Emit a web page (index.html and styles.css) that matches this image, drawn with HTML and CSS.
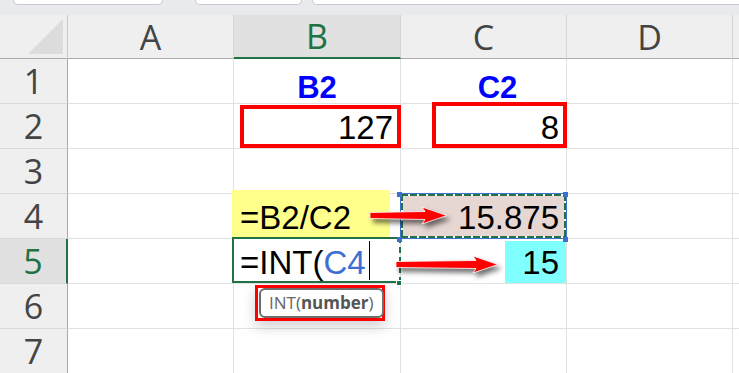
FILE: index.html
```html
<!DOCTYPE html>
<html>
<head>
<meta charset="utf-8">
<link rel="stylesheet" href="styles.css">
</head>
<body>
<div class="app">
  <div class="topbar">
    <div class="tab t1"></div>
    <div class="tab t2"></div>
    <div class="tab t3"></div>
  </div>
  <div class="sheet">
    <div class="corner"><svg width="35" height="35" viewBox="0 0 35 35"><polygon points="35,0 35,35 0,35" fill="#dcdcdc"/></svg></div>
    <div class="ch">A</div>
    <div class="ch sel">B</div>
    <div class="ch">C</div>
    <div class="ch">D</div>
    <div class="ch last"></div>

    <div class="rh">1</div>
    <div class="c"></div>
    <div class="c title">B2</div>
    <div class="c title shift">C2</div>
    <div class="c"></div>
    <div class="c"></div>

    <div class="rh">2</div>
    <div class="c"></div>
    <div class="c"><span class="v">127</span><span class="redbox rb-b2"></span></div>
    <div class="c"><span class="v">8</span><span class="redbox rb-c2"></span></div>
    <div class="c"></div>
    <div class="c"></div>

    <div class="rh">3</div>
    <div class="c"></div>
    <div class="c"></div>
    <div class="c"></div>
    <div class="c"></div>
    <div class="c"></div>

    <div class="rh">4</div>
    <div class="c"></div>
    <div class="c left yellow"><span class="v">=B2/C2</span></div>
    <div class="c marquee"><span class="v">15.875</span><i class="hd h-tl"></i><i class="hd h-tr"></i><i class="hd h-bl"></i><i class="hd h-br"></i></div>
    <div class="c"></div>
    <div class="c"></div>

    <div class="rh sel">5</div>
    <div class="c"></div>
    <div class="c left active"><span class="v">=INT(<span class="ref">C4</span><span class="caret"></span></span><i class="fill-handle"></i></div>
    <div class="c cy"><span class="hl">15</span></div>
    <div class="c"></div>
    <div class="c"></div>

    <div class="rh">6</div>
    <div class="c"></div>
    <div class="c"></div>
    <div class="c"></div>
    <div class="c"></div>
    <div class="c"></div>

    <div class="rh">7</div>
    <div class="c"></div>
    <div class="c"></div>
    <div class="c"></div>
    <div class="c"></div>
    <div class="c"></div>

    <svg class="arrow a1" width="78" height="18" viewBox="0 0 78 18"><polygon points="0,5.5 55,4.5 52,0 77,8.5 52,17 55,12.5 0,11.5" fill="#ff0000" stroke="#ffffff" stroke-width="0.8"/></svg>
    <svg class="arrow a2" width="103" height="18" viewBox="0 0 103 18"><polygon points="0,5.5 80,4.5 77,0 102,8.5 77,17 80,12.5 0,11.5" fill="#ff0000" stroke="#ffffff" stroke-width="0.8"/></svg>

    <div class="tip"><div class="tip-box">INT(<b>number</b>)</div></div>
  </div>
</div>
</body>
</html>
```

FILE: styles.css
```css
html, body {
  margin: 0;
  padding: 0;
}
body {
  width: 739px;
  height: 373px;
  overflow: hidden;
  background: #fff;
  font-family: "Liberation Sans", Arial, sans-serif;
}
.app {
  display: flex;
  flex-direction: column;
}
.topbar {
  height: 15px;
  background: #e9eaee;
  display: flex;
  align-items: flex-start;
  overflow: hidden;
}
.tab {
  height: 5px;
  box-sizing: border-box;
  background: #fff;
  border: 1px solid #c8c9cc;
  border-top: none;
  border-radius: 0 0 5px 5px;
}
.t1 { margin-left: 13px; width: 150px; }
.t2 { margin-left: 32px; width: 107px; }
.t3 { margin-left: 10px; flex: 1; margin-right: -10px; }

.sheet {
  position: relative;
  z-index: 0;
  display: grid;
  grid-template-columns: 68px 166px 167px 166px 166px 1fr;
  grid-template-rows: 44px repeat(7, 45px);
  background: #fff;
}
.corner, .ch, .rh, .c {
  box-sizing: border-box;
  position: relative;
}
.corner {
  background: #efefef;
  border-right: 1px solid #c9c9c9;
  border-bottom: 1px solid #ababab;
  display: flex;
  justify-content: flex-end;
  align-items: flex-end;
  padding: 0 4px 4px 0;
}
.corner svg { display: block; }
.ch, .rh {
  background: #efefef;
  display: flex;
  align-items: center;
  justify-content: center;
  font-family: "Open Sans", "Noto Sans", sans-serif;
  font-size: 34px;
  line-height: 34px;
  color: #444;
}
.ch {
  border-right: 1px solid #d6d6d6;
  border-bottom: 1px solid #ababab;
}
.ch.sel {
  background: #e1e1e1;
  color: #1f7244;
  border-bottom: 2px solid #217346;
}
.rh {
  border-right: 1px solid #ababab;
  border-bottom: 1px solid #dadada;
}
.rh.sel {
  background: #e1e1e1;
  color: #1f7244;
  border-right: 2px solid #217346;
}
.c {
  border-right: 1px solid #e1e1e1;
  border-bottom: 1px solid #e1e1e1;
  display: flex;
  align-items: flex-end;
  justify-content: flex-end;
  padding: 0 7px 2px 6px;
  font-size: 33px;
  line-height: 36px;
  color: #000;
  white-space: nowrap;
}
.c.left { justify-content: flex-start; }
.v {
  position: relative;
  z-index: 2;
}
.title {
  justify-content: center;
  font-weight: bold;
  color: #0000ff;
  font-size: 31px;
  line-height: 31px;
  padding: 0;
}
.title.shift { padding-left: 28px; }

.redbox {
  position: absolute;
  box-sizing: border-box;
  border: 4px solid #ff0000;
  z-index: 3;
}
.rb-b2 { left: 6px; top: 1px; width: 161px; height: 43px; }
.rb-c2 { left: 31px; top: -2px; width: 135px; height: 46px; }

.yellow::before {
  content: "";
  position: absolute;
  left: -2px;
  top: -4px;
  width: 158px;
  bottom: 0;
  background: #ffff8c;
  z-index: 1;
}

.marquee { background: #e6d7d3; }
.marquee::before {
  content: "";
  position: absolute;
  left: -1px;
  top: -1px;
  right: -1px;
  bottom: -1px;
  border: 1px solid #3d6fcd;
  z-index: 3;
}
.marquee::after {
  content: "";
  position: absolute;
  left: 0;
  top: 0;
  right: 0;
  bottom: 0;
  z-index: 3;
  background:
    repeating-linear-gradient(90deg, #217346 0 7px, #fff 7px 9px) top / 100% 2px no-repeat,
    repeating-linear-gradient(90deg, #217346 0 7px, #fff 7px 9px) bottom / 100% 2px no-repeat,
    repeating-linear-gradient(180deg, #217346 0 7px, #fff 7px 9px) left / 2px 100% no-repeat,
    repeating-linear-gradient(180deg, #217346 0 7px, #fff 7px 9px) right / 2px 100% no-repeat;
}
.hd {
  position: absolute;
  width: 5px;
  height: 5px;
  background: #3d6fcd;
  z-index: 4;
}
.h-tl { left: -4px; top: -2px; }
.h-tr { left: 162px; top: -2px; }
.h-bl { left: -4px; top: 43px; }
.h-br { left: 162px; top: 43px; }

.active::after {
  content: "";
  position: absolute;
  left: -2px;
  top: -2px;
  width: 169px;
  height: 46px;
  box-sizing: border-box;
  border: 2px solid #217346;
  border-right: 2px dashed #217346;
  z-index: 3;
}
.fill-handle {
  position: absolute;
  left: 162px;
  top: 41px;
  width: 6px;
  height: 6px;
  background: #217346;
  border: 1px solid #fff;
  box-sizing: border-box;
  z-index: 4;
}
.ref { color: #3d6fd3; }
.caret {
  display: inline-block;
  width: 1px;
  height: 39px;
  background: #000;
  vertical-align: -6px;
  margin-left: 3px;
}

.cy { padding: 0; }
.hl {
  align-self: stretch;
  margin-top: 2px;
  width: 61px;
  box-sizing: border-box;
  background: #80ffff;
  display: flex;
  align-items: flex-end;
  justify-content: flex-end;
  padding: 0 7px 2px 0;
}

.arrow {
  position: absolute;
  z-index: 6;
  filter: drop-shadow(3px 4px 2.5px rgba(0, 0, 0, 0.55));
}
.a1 { left: 370px; top: 192px; }
.a2 { left: 396px; top: 241px; }

.tip {
  position: absolute;
  left: 255px;
  top: 270px;
  width: 130px;
  height: 36px;
  box-sizing: border-box;
  border: 3px solid #ff0000;
  padding: 0 0 0 1px;
  display: flex;
  align-items: center;
  z-index: 6;
  box-shadow: 0 6px 14px rgba(0, 0, 0, 0.18);
}
.tip-box {
  flex: 1;
  height: 30px;
  margin-right: -2px;
  box-sizing: border-box;
  border: 2px solid #6e6e6e;
  border-radius: 6px;
  background: #fff;
  font-family: "Open Sans", "Noto Sans", sans-serif;
  font-size: 17px;
  line-height: 26px;
  color: #666;
  padding-left: 8px;
  white-space: nowrap;
}
.tip-box b {
  font-weight: bold;
  color: #555;
}
```
